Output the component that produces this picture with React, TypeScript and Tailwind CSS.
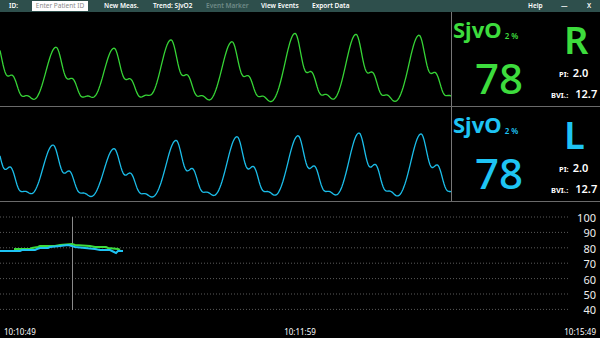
import React from 'react'

type Peak = [number, number]

// gaussian helper
function g(d: number, s: number): number {
  return Math.exp(-(d * d) / (2 * s * s))
}

function wavePoints(peaks: Peak[], base: number, top: number, shoulder: number, tail: number): string {
  const pts: string[] = []
  for (let x = 0; x <= 451; x += 1) {
    let y = base
    for (const [c, py] of peaks) {
      const a = base - (py - top)
      const d = x - c
      y -= a * 0.92 * (d < 0 ? g(d, 10) : g(d, 6.8))
      y -= a * shoulder * g(x - (c + 17), 5)
      y -= a * tail * g(x - (c + 31), 4.5)
    }
    pts.push(`${x},${y.toFixed(1)}`)
  }
  return pts.join(' ')
}

const GREEN_PEAKS: Peak[] = [[-4, 35], [56, 42], [114, 43], [171, 34], [232, 36], [295, 27], [356, 28], [419, 29]]
const CYAN_PEAKS: Peak[] = [[-6, 132], [53, 140], [114, 144], [176, 135], [237, 131], [298, 130], [359, 127], [421, 128]]

const greenWave = wavePoints(GREEN_PEAKS, 96, 12, 0.4, 0.15)
const cyanWave = wavePoints(CYAN_PEAKS, 96, 107, 0.46, 0.14)

const trendCyan = '0,49 20,49 22,48 35,48 37,47 40,46 48,46 50,45 60,44 68,43 72,44 75,45 85,46 95,47 100,48 110,48 112,49 116,51 118,49 123,49'
const trendGreen = '14,47 30,47 32,46 38,45 40,44 55,44 60,43 72,42 75,43 90,44 95,45 106,45 108,46 118,47 120,48'

const GRID_Y = [15, 30.4, 45.8, 61.2, 76.6, 92, 107.4]
const Y_LABELS = ['100', '90', '80', '70', '60', '50', '40']

function MenuBar() {
  return (
    <div className="h-[12px] bg-[#2e4f4c] flex items-center text-[6.5px] font-semibold text-white leading-none whitespace-nowrap">
      <div className="w-[32px] pl-[9px]">ID:</div>
      <div className="w-[56px] h-[10px] bg-white text-[#8a8a8a] font-normal flex items-center justify-center">Enter Patient ID</div>
      <div className="w-[16px]" />
      <div className="w-[49px]">New Meas.</div>
      <div className="w-[53px]">Trend: SjvO2</div>
      <div className="w-[55px] text-[#6f8a87]">Event Marker</div>
      <div className="w-[51px]">View Events</div>
      <div className="w-[216px]">Export Data</div>
      <div className="w-[33px]">Help</div>
      <div className="w-[26px]">—</div>
      <div>X</div>
    </div>
  )
}

function NumericPanel({ color, side }: { color: string; side: string }) {
  return (
    <div className={`flex-1 flex ${color}`}>
      <div className="w-[99px] flex flex-col">
        <div className="mt-[5px] pl-[1px] flex items-baseline leading-[24px]">
          <span className="text-[22px] font-bold">SjvO</span>
          <span className="text-[8px] ml-[3px] font-semibold translate-y-[1px]">2 %</span>
        </div>
        <div className="mt-[10px] pl-[23px] text-[42px] leading-[42px] font-medium">78</div>
      </div>
      <div className="flex-1 flex flex-col whitespace-nowrap">
        <div className="mt-[8px] ml-[13px] text-[38px] leading-[38px] font-semibold">{side}</div>
        <div className="mt-[9px] ml-[8px] flex items-baseline text-white font-bold leading-[12px]">
          <span className="text-[7.5px]">PI:</span>
          <span className="text-[11px] ml-[4px] font-semibold">2.0</span>
        </div>
        <div className="mt-[8px] flex items-baseline text-white font-bold leading-[12px]">
          <span className="text-[7.5px]">BVI</span>
          <span className="text-[5px]">ₗ.</span>
          <span className="text-[7.5px]">:</span>
          <span className="text-[11px] ml-[7px] font-semibold">12.7</span>
        </div>
      </div>
    </div>
  )
}

function WaveRow({ points, stroke, color, side }: { points: string; stroke: string; color: string; side: string }) {
  return (
    <div className="h-[95px] flex border-b border-[#6a6a6a]">
      <svg width="451" height="94" viewBox="0 0 451 94" className="shrink-0">
        <polyline points={points} fill="none" stroke={stroke} strokeWidth="1.3" strokeLinejoin="round" />
      </svg>
      <div className="w-[1px] bg-[#777]" />
      <NumericPanel color={color} side={side} />
    </div>
  )
}

function TrendArea() {
  return (
    <div className="flex-1 flex flex-col">
      <div className="h-[116px] flex">
        <svg width="572" height="116" viewBox="0 0 572 116" className="shrink-0">
          {GRID_Y.map((y) => (
            <line key={y} x1="0" x2="570" y1={y} y2={y} stroke="#5a5a5a" strokeWidth="1" strokeDasharray="1 2" />
          ))}
          <line x1="72.5" x2="72.5" y1="15" y2="108" stroke="#8a8a8a" strokeWidth="1" />
          <polyline points={trendGreen} fill="none" stroke="#3ddc3d" strokeWidth="2" />
          <polyline points={trendCyan} fill="none" stroke="#1ec4f4" strokeWidth="2" />
        </svg>
        <div className="flex-1 flex flex-col pt-[8px] text-[11px] text-[#eeeeee]">
          {Y_LABELS.map((l) => (
            <div key={l} className="h-[15.4px] leading-[15.4px] text-right pr-[4px]">{l}</div>
          ))}
        </div>
      </div>
      <div className="flex justify-between px-[4px] pt-[9px] text-[8px] leading-[10px] text-white">
        <span>10:10:49</span>
        <span>10:11:59</span>
        <span>10:15:49</span>
      </div>
    </div>
  )
}

export default function App() {
  return (
    <div className="w-[600px] h-[338px] bg-black flex flex-col overflow-hidden font-['Noto_Sans','Open_Sans',sans-serif]">
      <MenuBar />
      <WaveRow points={greenWave} stroke="#36d436" color="text-[#3ddc3d]" side="R" />
      <WaveRow points={cyanWave} stroke="#1bbde9" color="text-[#1ec4f4]" side="L" />
      <TrendArea />
    </div>
  )
}
